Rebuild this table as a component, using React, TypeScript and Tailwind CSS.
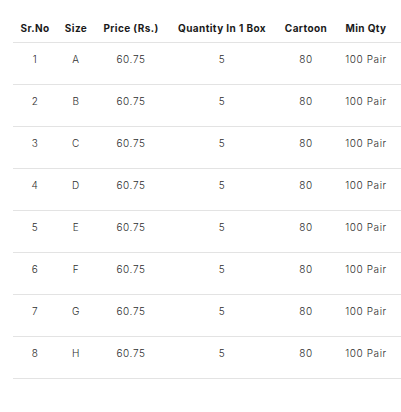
import React from "react";

const rows = ["A", "B", "C", "D", "E", "F", "G", "H"];
const cols = "grid grid-cols-[44px_38px_72px_110px_58px_62px]";

export default function App() {
  return (
    <div className="w-[401px] h-[412px] bg-white pl-[13px] overflow-hidden" style={{ fontFamily: "Inter, 'Noto Sans', sans-serif" }}>
      <div className="w-[388px]">
        <div className={`${cols} h-[43px] pt-[22px] border-b border-[#e3e3e3] text-[10px] leading-[12px] font-bold tracking-[0.4px] text-[#1a1a1a] text-center`}>
          <div>Sr.No</div>
          <div>Size</div>
          <div>Price (Rs.)</div>
          <div className="whitespace-nowrap">Quantity In 1 Box</div>
          <div>Cartoon</div>
          <div>Min Qty</div>
        </div>
        {rows.map((s, i) => (
          <div key={s} className={`${cols} h-[42px] pt-[10px] border-b border-[#e3e3e3] text-[10px] leading-[12px] font-light tracking-[0.6px] text-[#2e2e2e] text-center`}>
            <div>{i + 1}</div>
            <div>{s}</div>
            <div>60.75</div>
            <div>5</div>
            <div>80</div>
            <div className="whitespace-nowrap">100 Pair</div>
          </div>
        ))}
      </div>
    </div>
  );
}
